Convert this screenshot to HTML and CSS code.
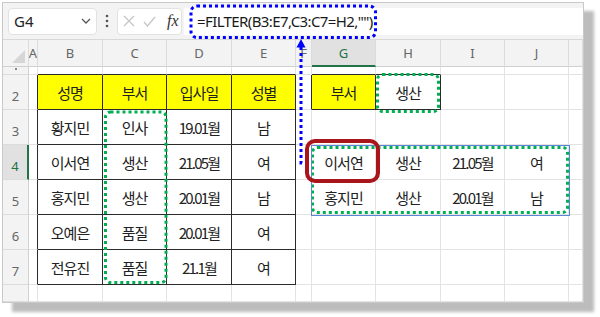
FILE: index.html
```html
<!DOCTYPE html>
<html lang="ko">
<head>
<meta charset="UTF-8">
<title>FILTER 함수</title>
<link rel="stylesheet" href="styles.css">
</head>
<body>
<div class="shot">
  <div class="frame">
    <div class="toolbar">
      <div class="namebox">
        <span>G4</span>
        <svg class="chev" width="10" height="6" viewBox="0 0 10 6"><polyline points="1,1 5,5 9,1" fill="none" stroke="#555" stroke-width="1.3"/></svg>
      </div>
      <svg class="grip" width="4" height="14" viewBox="0 0 4 14"><circle cx="2" cy="2" r="1.3" fill="#555"/><circle cx="2" cy="7" r="1.3" fill="#555"/><circle cx="2" cy="12" r="1.3" fill="#555"/></svg>
      <div class="fnbox">
        <svg width="12" height="12" viewBox="0 0 12 12"><path d="M1 1L11 11M11 1L1 11" stroke="#c4c4c4" stroke-width="1.2" fill="none"/></svg>
        <svg width="13" height="11" viewBox="0 0 13 11"><path d="M1 6L4.5 10L12 1" stroke="#c4c4c4" stroke-width="1.2" fill="none"/></svg>
        <span class="fx">fx</span>
      </div>
      <div class="formula">=FILTER(B3:E7,C3:C7=H2,"")</div>
    </div>

    <div class="sheet">
      <!-- column headers -->
      <div class="ch corner"><i></i></div>
      <div class="ch">A</div>
      <div class="ch">B</div>
      <div class="ch">C</div>
      <div class="ch">D</div>
      <div class="ch">E</div>
      <div class="ch">F</div>
      <div class="ch sel">G</div>
      <div class="ch">H</div>
      <div class="ch">I</div>
      <div class="ch">J</div>
      <div class="ch"></div>

      <!-- row 1 -->
      <div class="rh r1"><b></b></div>
      <div class="c"></div>
      <div class="c tt"></div><div class="c tt"></div><div class="c tt"></div><div class="c tt"></div>
      <div class="c"></div>
      <div class="c tt"></div><div class="c tt"></div>
      <div class="c"></div><div class="c"></div><div class="c"></div>

      <!-- row 2 -->
      <div class="rh">2</div>
      <div class="c tl"></div>
      <div class="c t hd">성명</div>
      <div class="c t hd">부서</div>
      <div class="c t hd">입사일</div>
      <div class="c t hd">성별</div>
      <div class="c tl"></div>
      <div class="c t hd">부서</div>
      <div class="c t">생산</div>
      <div class="c"></div><div class="c"></div><div class="c"></div>

      <!-- row 3 -->
      <div class="rh">3</div>
      <div class="c tl"></div>
      <div class="c t">황지민</div>
      <div class="c t">인사</div>
      <div class="c t num">19.01월</div>
      <div class="c t">남</div>
      <div class="c"></div>
      <div class="c"></div><div class="c"></div><div class="c"></div><div class="c"></div><div class="c"></div>

      <!-- row 4 -->
      <div class="rh sel">4</div>
      <div class="c tl"></div>
      <div class="c t">이서연</div>
      <div class="c t">생산</div>
      <div class="c t num">21.05월</div>
      <div class="c t">여</div>
      <div class="c"></div>
      <div class="c">이서연</div>
      <div class="c">생산</div>
      <div class="c num">21.05월</div>
      <div class="c">여</div>
      <div class="c"></div>

      <!-- row 5 -->
      <div class="rh">5</div>
      <div class="c tl"></div>
      <div class="c t">홍지민</div>
      <div class="c t">생산</div>
      <div class="c t num">20.01월</div>
      <div class="c t">남</div>
      <div class="c"></div>
      <div class="c">홍지민</div>
      <div class="c">생산</div>
      <div class="c num">20.01월</div>
      <div class="c">남</div>
      <div class="c"></div>

      <!-- row 6 -->
      <div class="rh">6</div>
      <div class="c tl"></div>
      <div class="c t">오예은</div>
      <div class="c t">품질</div>
      <div class="c t num">20.01월</div>
      <div class="c t">여</div>
      <div class="c"></div>
      <div class="c"></div><div class="c"></div><div class="c"></div><div class="c"></div><div class="c"></div>

      <!-- row 7 -->
      <div class="rh">7</div>
      <div class="c tl"></div>
      <div class="c t">전유진</div>
      <div class="c t">품질</div>
      <div class="c t num">21.1월</div>
      <div class="c t">여</div>
      <div class="c"></div>
      <div class="c"></div><div class="c"></div><div class="c"></div><div class="c"></div><div class="c"></div>

      <!-- row 8 -->
      <div class="rh"></div>
      <div class="c"></div><div class="c"></div><div class="c"></div><div class="c"></div><div class="c"></div>
      <div class="c"></div><div class="c"></div><div class="c"></div><div class="c"></div><div class="c"></div><div class="c"></div>
    </div>
  </div>

  <!-- annotations drawn over the screenshot -->
  <svg class="marks" width="600" height="317" viewBox="0 0 600 317">
    <g fill="none" stroke-dasharray="3 3">
      <rect x="191" y="6" width="184.5" height="31.5" rx="6" stroke="#0000ff" stroke-width="3"/>
      <polyline points="301,47 301,163 308,163" stroke="#0000ff" stroke-width="3"/>
      <rect x="105.5" y="112" width="60.5" height="170.5" rx="5" stroke="#00b050" stroke-width="3"/>
      <rect x="377.5" y="74.5" width="61" height="37" rx="5" stroke="#00b050" stroke-width="3"/>
      <rect x="312.5" y="147.5" width="255" height="65" rx="5" stroke="#00b050" stroke-width="3"/>
    </g>
    <polygon points="301,39 296.5,47.5 305.5,47.5" fill="#0000ff"/>
    <rect x="311.5" y="145.5" width="258" height="70" fill="none" stroke="#5b86d4" stroke-width="1"/>
    <rect x="307" y="141" width="71" height="40" rx="8" fill="none" stroke="#a9151b" stroke-width="4"/>
  </svg>
</div>
</body>
</html>
```

FILE: styles.css
```css
body{
    margin: 0;
    background-color: #fff;
    font-family: "Noto Sans", "Noto Sans CJK KR", sans-serif;
}
.shot{
    position: relative;
    width: 600px;
    height: 317px;
    padding: 2px 0 0 2px;
    box-sizing: border-box;
}
.frame{
    width: 580px;
    border: 1px solid #c9c9c9;
    background-color: #fff;
    box-shadow: 10px 9px 3px #bcbcbc;
}
.toolbar{
    display: flex;
    align-items: center;
    height: 36px;
    padding-left: 5px;
    background-color: #f3f3f3;
    border-bottom: 1px solid #d8d8d8;
}
.namebox{
    display: flex;
    align-items: center;
    justify-content: space-between;
    box-sizing: border-box;
    width: 89px;
    height: 27px;
    padding: 0 5px 0 5px;
    background-color: #fff;
    border: 1px solid #e2e2e2;
    border-radius: 4px;
    font-size: 15px;
    color: #222;
}
.grip{
    margin: 0 8px 0 8px;
}
.fnbox{
    display: flex;
    align-items: center;
    gap: 8px;
    box-sizing: border-box;
    width: 65px;
    height: 27px;
    padding-left: 5px;
    background-color: #fff;
    border: 1px solid #e2e2e2;
    border-radius: 4px;
}
.fx{
    font-family: "Liberation Serif", serif;
    font-style: italic;
    font-size: 16px;
    color: #333;
    margin-left: 3px;
}
.formula{
    flex: 1;
    height: 27px;
    margin-left: 2px;
    padding-left: 13px;
    background-color: #fff;
    font-size: 15px;
    line-height: 27px;
    color: #1a1a1a;
    letter-spacing: -0.6px;
}
.sheet{
    display: grid;
    grid-template-columns: 26px 9px 65px 64px 65px 64px 16px 64px 65px 64px 64px 1fr;
    grid-template-rows: 27px 8px repeat(6, 35px) 17px;
}
.sheet > div{
    box-sizing: border-box;
    overflow: hidden;
}
.ch{
    display: flex;
    align-items: center;
    justify-content: center;
    background-color: #f3f3f3;
    border-right: 1px solid #dcdcdc;
    border-bottom: 1px solid #d0d0d0;
    font-size: 13px;
    color: #666;
}
.ch.sel{
    background-color: #e1e1e1;
    border-bottom: 2px solid #217346;
    color: #217346;
}
.corner{
    position: relative;
}
.corner i{
    position: absolute;
    right: 3px;
    bottom: 3px;
    width: 0;
    height: 0;
    border-left: 13px solid transparent;
    border-bottom: 13px solid #d6d6d6;
}
.rh{
    display: flex;
    align-items: flex-end;
    justify-content: center;
    padding-bottom: 4px;
    background-color: #f3f3f3;
    border-right: 1px solid #d0d0d0;
    border-bottom: 1px solid #dcdcdc;
    font-size: 13px;
    color: #666;
}
.rh.sel{
    background-color: #e1e1e1;
    border-right: 2px solid #217346;
    color: #217346;
}
.r1{
    align-items: flex-start;
    padding: 0;
}
.r1 b{
    width: 2px;
    height: 2px;
    margin-top: 1px;
    background-color: #888;
}
.c{
    display: flex;
    align-items: center;
    justify-content: center;
    border-right: 1px solid #e3e3e3;
    border-bottom: 1px solid #e3e3e3;
    font-family: "Noto Sans CJK KR", sans-serif;
    font-size: 15px;
    letter-spacing: -1px;
    color: #222;
}
.c.t{
    border-right-color: #2b2b2b;
    border-bottom-color: #2b2b2b;
}
.c.tl{
    border-right-color: #2b2b2b;
}
.c.tt{
    border-bottom-color: #2b2b2b;
}
.c.hd{
    background-color: #ffff00;
}
.c.num{
    letter-spacing: -1.8px;
}
.marks{
    position: absolute;
    left: 0;
    top: 0;
    pointer-events: none;
}
```
